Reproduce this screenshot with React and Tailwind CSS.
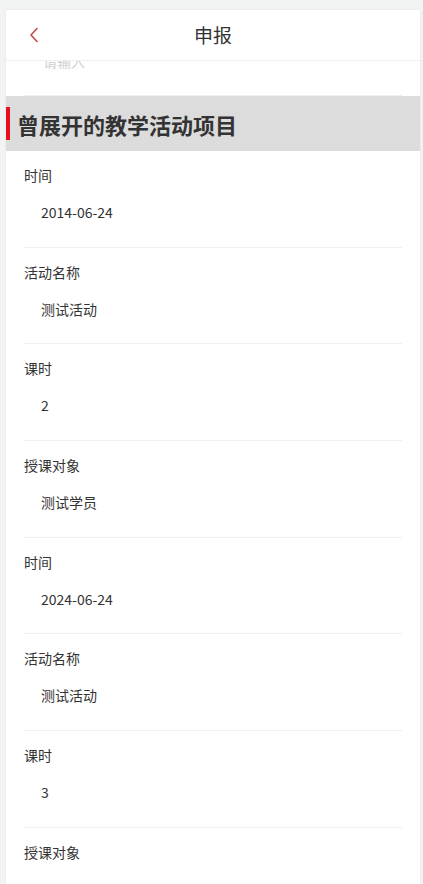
import React from 'react';

const rows = [
    { label: '时间', value: '2014-06-24' },
    { label: '活动名称', value: '测试活动' },
    { label: '课时', value: '2' },
    { label: '授课对象', value: '测试学员' },
    { label: '时间', value: '2024-06-24' },
    { label: '活动名称', value: '测试活动' },
    { label: '课时', value: '3' },
    { label: '授课对象', value: '' },
];

export default function App() {
    return (
        <div className="h-[884px] overflow-hidden bg-[#f2f3f3] pt-[10px] pl-[6px] pr-[3px]" style={{ fontFamily: '"Noto Sans CJK SC", "Noto Sans", sans-serif' }}>
            <div className="h-full bg-white overflow-hidden shadow-[0_0_2px_rgba(0,0,0,0.08)]">
                <div className="relative h-[51px] flex items-center justify-center border-b border-[#f0f0f0]">
                    <button className="absolute left-[20px] top-[16px] w-[16px] h-[18px] flex items-center justify-center">
                        <svg width="10" height="16" viewBox="0 0 10 16" fill="none">
                            <path d="M8 1.5 L2 8 L8 14.5" stroke="#c8413d" strokeWidth="1.5" strokeLinecap="round" strokeLinejoin="round" />
                        </svg>
                    </button>
                    <h1 className="text-[19px] leading-[24px] text-[#333]">申报</h1>
                </div>

                <div className="h-[35px] overflow-hidden mx-[18px] border-b border-[#eeeeee]">
                    <div className="-mt-[8px] pl-[19px] text-[14px] leading-[16px] text-[#cfcfcf]">请输入</div>
                </div>

                <div className="h-[55px] bg-[#dcdcdc] flex items-center">
                    <div className="w-[4px] h-[33px] bg-[#e8101e]" />
                    <h2 className="ml-[7px] text-[22px] leading-[28px] font-bold text-[#333]">曾展开的教学活动项目</h2>
                </div>

                {rows.map((row, i) => (
                    <div key={i} className="mx-[18px] pt-[14px] pb-[24.67px] border-b border-[#f0f0f0]">
                        <div className="text-[14px] leading-[20px] text-[#333]">{row.label}</div>
                        <div className="mt-[17px] pl-[17px] text-[14px] leading-[20px] text-[#333] h-[20px]">{row.value}</div>
                    </div>
                ))}
            </div>
        </div>
    );
}
